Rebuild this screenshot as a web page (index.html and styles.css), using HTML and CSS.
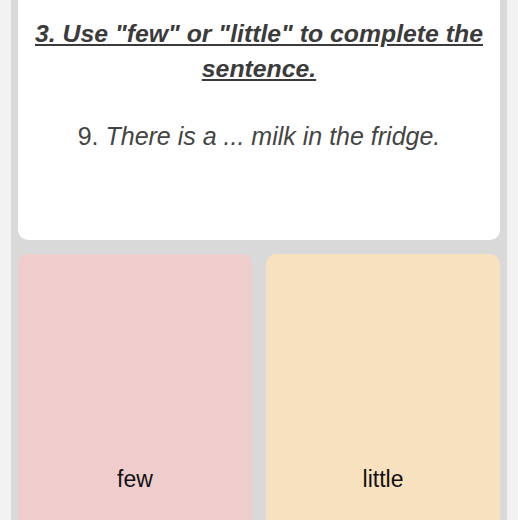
FILE: index.html
```html
<!DOCTYPE html>
<html lang="en">
<head>
  <meta charset="UTF-8">
  <meta name="viewport" content="width=device-width, initial-scale=1">
  <title>Few or little</title>
  <link rel="stylesheet" href="styles.css">
</head>
<body>
  <div class="panel">
    <!-- Question card -->
    <div class="question-card">
      <h2 class="task">3. Use "few" or "little" to complete the sentence.</h2>
      <p class="sentence">9. <em>There is a ... milk in the fridge.</em></p>
    </div>

    <!-- Answer options -->
    <div class="options">
      <button class="option option-red">few</button>
      <button class="option option-yellow">little</button>
    </div>
  </div>
</body>
</html>
```

FILE: styles.css
```css
body {
  margin: 0;
  background-color: #f2f2f2;
  font-family: "Liberation Sans", Arial, sans-serif;
}
.panel {
  margin: 0 11px;
  padding: 0 7px;
  background-color: #d9d9d9;
  min-height: 520px;
}
.question-card {
  background-color: #fff;
  border-radius: 0 0 10px 10px;
  padding: 16px 12px 86px;
  text-align: center;
}
.task {
  margin: 0;
  font-size: 24.8px;
  line-height: 35px;
  font-weight: bold;
  font-style: italic;
  text-decoration: underline;
  color: #3b3b3b;
}
.sentence {
  margin: 33px 0 0;
  font-size: 25px;
  line-height: 35px;
  color: #444;
}
.options {
  display: grid;
  grid-template-columns: 1fr 1fr;
  gap: 14px;
  margin-top: 14px;
}
.option {
  height: 450px;
  border: none;
  border-radius: 10px;
  font-family: inherit;
  font-size: 23px;
  color: #111;
  cursor: pointer;
}
.option-red {
  background-color: #efcdcd;
}
.option-yellow {
  background-color: #f8e1bf;
}
```
